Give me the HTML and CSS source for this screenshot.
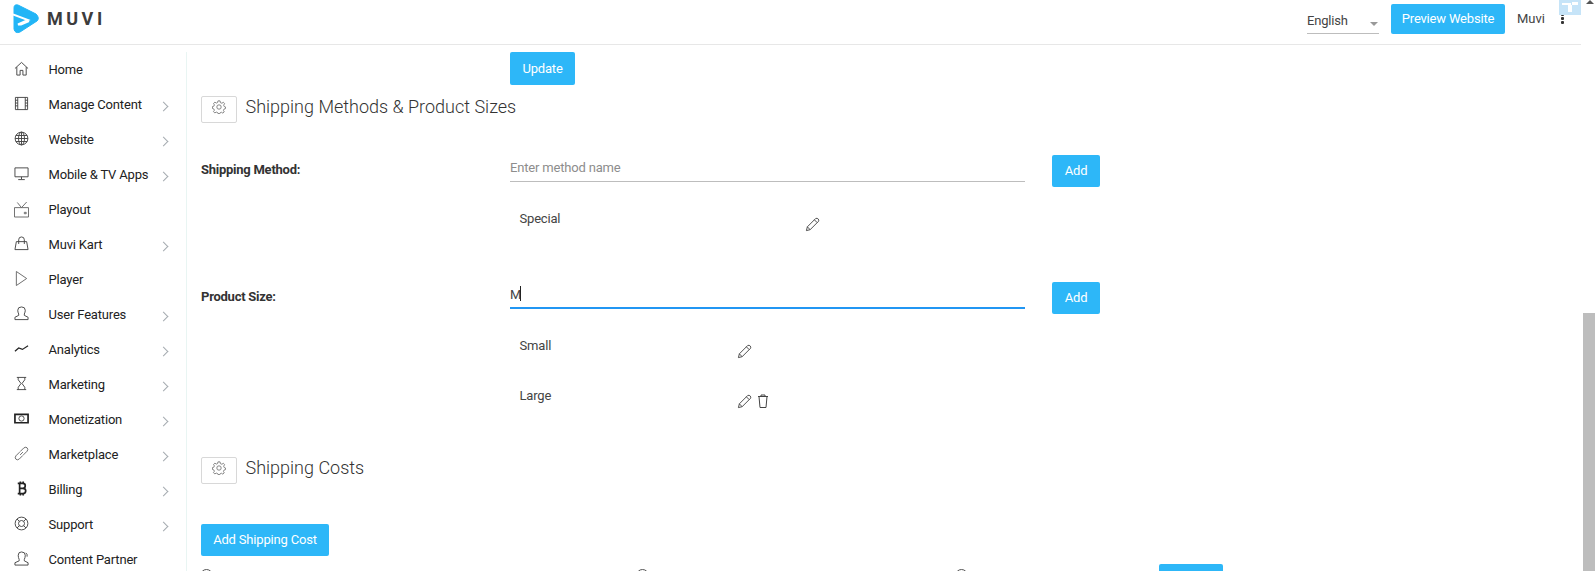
FILE: index.html
```html
<!DOCTYPE html>
<html lang="en">
<head>
<meta charset="utf-8">
<title>Muvi - Shipping</title>
<link rel="stylesheet" href="styles.css">
</head>
<body>
<div class="page">
  <header class="topbar">
    <a class="logo">
      <svg class="logo-mark" width="27" height="30" viewBox="0 0 27 30"><path d="M1 4Q1 0 5 1L23 10Q27 14 24 17L7 28Q2 30 1 25Z" fill="#22b5f6" stroke="#22b5f6" stroke-linejoin="round"/><path d="M0 10.500L15 16L5 20.500H8L16 17" fill="none" stroke="#fff" stroke-width="2"/></svg>
      <span class="logo-text">MUVI</span>
    </a>
    <div class="lang"><span>English</span><i class="lang-caret"></i></div>
    <button class="btn btn-preview">Preview Website</button>
    <span class="user">Muvi</span>
    <span class="kebab"><i></i><i></i><i></i></span>
    <div class="tile"><i class="t1"></i><i class="t2"></i><i class="t3"></i></div>
  </header>
  <div class="layout">
    <nav class="sidebar">
      <a class="nav-item"><svg class="ico" viewBox="0 0 16 16"><path d="M1 8L8 1.500L15 8M3 6.500V15H6.500V10H9.500V15H13V6.500"/></svg><span>Home</span></a>
      <a class="nav-item more"><svg class="ico" viewBox="0 0 16 16"><path d="M1.500 1.500H14.500V14.500H1.500ZM4 1.500V14.500M12 1.500V14.500M1.500 4.500H4M1.500 7.500H4M1.500 10.500H4M12 4.500H14.500M12 7.500H14.500M12 10.500H14.500"/></svg><span>Manage Content</span></a>
      <a class="nav-item more"><svg class="ico" viewBox="0 0 16 16"><circle cx="8" cy="8" r="6.800"/><ellipse cx="8" cy="8" rx="3.200" ry="6.800"/><path d="M8 1.200V14.800M1.200 8H14.800M2 4.800H14M2 11.200H14"/></svg><span>Website</span></a>
      <a class="nav-item more"><svg class="ico" viewBox="0 0 16 16"><path d="M1 2H15V11.500H1ZM8 11.500V14M4.500 14.500H11.500"/></svg><span>Mobile &amp; TV Apps</span></a>
      <a class="nav-item"><svg class="ico ico-tall" viewBox="0 0 16 17"><path class="soft" d="M0.500 6.500H15.500V16.500H0.500ZM3.500 1L8 6.500L13.500 0.500M11 11.500H13V13H11Z"/></svg><span>Playout</span></a>
      <a class="nav-item more"><svg class="ico" viewBox="0 0 16 16"><path d="M2.500 6H13.500L15 14.500H1ZM5 8.500V4Q5 1 8 1Q11 1 11 4V8.500"/></svg><span>Muvi Kart</span></a>
      <a class="nav-item"><svg class="ico" viewBox="0 0 16 16"><path class="soft" d="M2.500 0.500L13.500 8L2.500 15.500Z"/></svg><span>Player</span></a>
      <a class="nav-item more"><svg class="ico" viewBox="0 0 16 16"><path d="M5 8.500Q4 6.500 4 4.500Q4 1 8 1Q12 1 12 4.500Q12 6.500 11 8.500V10L15 12V14.500H1V12L5 10Z"/></svg><span>User Features</span></a>
      <a class="nav-item more"><svg class="ico" viewBox="0 0 16 16"><path class="dark" d="M1 11L5 7.500L9 9L15 5"/></svg><span>Analytics</span></a>
      <a class="nav-item more"><svg class="ico" viewBox="0 0 16 16"><path d="M3 1.500H13M3 14.500H13M4.500 1.500V4L7.500 8L4.500 12V14.500M11.500 1.500V4L8.500 8L11.500 12V14.500"/></svg><span>Marketing</span></a>
      <a class="nav-item more"><svg class="ico" viewBox="0 0 16 16"><path class="thick" d="M1 3.500H15V12.500H1Z"/><circle cx="8" cy="8" r="2.800"/></svg><span>Monetization</span></a>
      <a class="nav-item more"><svg class="ico" viewBox="0 0 16 16"><path class="soft" d="M6.500 9.500L9.500 6.500M6 6.500L2 10.500Q0.500 13 2 14Q3.500 15.500 5.500 14L9.500 10M6.500 6L10.500 2Q13 0.500 14 2Q15.500 3.500 14 5.500L10 9.500"/></svg><span>Marketplace</span></a>
      <a class="nav-item more"><svg class="ico" viewBox="0 0 16 16"><path class="thick" d="M4 2.500H9.500Q12 2.500 12 5Q12 7.800 9.500 7.800H6M9.500 7.800Q12.500 7.800 12.500 10.500Q12.500 13.500 9.500 13.500H4M6 2.500V13.500M6.800 0.500V2.500M9.800 0.500V2.500M6.800 13.500V15.500M9.800 13.500V15.500"/></svg><span>Billing</span></a>
      <a class="nav-item more"><svg class="ico" viewBox="0 0 16 16"><circle cx="8" cy="8" r="6.800"/><circle cx="8" cy="8" r="3.200"/><path d="M3.200 3.200L5.700 5.700M12.800 3.200L10.300 5.700M3.200 12.800L5.700 10.300M12.800 12.800L10.300 10.300"/></svg><span>Support</span></a>
      <a class="nav-item"><svg class="ico" viewBox="0 0 16 16"><path d="M5.500 9Q4.500 7 4.500 4.500Q4.500 1 8 1Q12 1 12 4.500Q12 7 11 9V10.500L15 12.500V15H1V12.500L5.500 10.500ZM12.500 2Q14.500 3 14 6"/></svg><span>Content Partner</span></a>
    </nav>
    <main class="content">
      <button class="btn btn-update">Update</button>

      <div class="section-head">
        <span class="gear-box"><svg class="gear" viewBox="0 0 16 16"><circle cx="8" cy="8" r="2.500"/><path d="M6.800 1H9.200L9.600 3L11.300 3.700L13 2.600L14.400 4.200L13.300 5.900L13.900 7.400L15.500 8V9.800L13.800 10.300L13.100 12L14 13.600L12.400 15L10.800 14L9.300 14.600L9 15.500H6.800L6.500 14.400L4.900 13.800L3.200 14.800L1.700 13.300L2.700 11.700L2.100 10.200L0.500 9.700V7.500L2.100 7.100L2.700 5.600L1.800 3.900L3.300 2.500L5 3.500L6.400 2.900Z"/></svg></span>
        <h2>Shipping Methods &amp; Product Sizes</h2>
      </div>

      <div class="field field-first">
        <label class="field-label">Shipping Method:</label>
        <input class="field-input" type="text" placeholder="Enter method name">
        <button class="btn btn-add">Add</button>
      </div>
      <ul class="items">
        <li class="item"><span class="item-name name-wide">Special</span><svg class="tool" viewBox="0 0 16 16"><path d="M1.500 14.500L2.500 10.500L11.500 1.500Q13 1 14.200 2.200Q15 3.500 14.500 4.500L5.500 13.500ZM2.500 10.500L5.500 13.500M10 3L13 6"/></svg></li>
      </ul>

      <div class="field field-second">
        <label class="field-label">Product Size:</label>
        <div class="input-wrap">
          <input class="field-input focused" type="text" value="M">
          <i class="caret"></i>
        </div>
        <button class="btn btn-add">Add</button>
      </div>
      <ul class="items">
        <li class="item"><span class="item-name">Small</span><svg class="tool" viewBox="0 0 16 16"><path d="M1.500 14.500L2.500 10.500L11.500 1.500Q13 1 14.200 2.200Q15 3.500 14.500 4.500L5.500 13.500ZM2.500 10.500L5.500 13.500M10 3L13 6"/></svg></li>
        <li class="item"><span class="item-name">Large</span><svg class="tool" viewBox="0 0 16 16"><path d="M1.500 14.500L2.500 10.500L11.500 1.500Q13 1 14.200 2.200Q15 3.500 14.500 4.500L5.500 13.500ZM2.500 10.500L5.500 13.500M10 3L13 6"/></svg><svg class="tool trash" viewBox="0 0 12 14"><path d="M1 2.500H11M4 2.500V1H8V2.500M2 2.500L3 13.500H9L10 2.500"/></svg></li>
      </ul>

      <div class="section-head head-costs">
        <span class="gear-box"><svg class="gear" viewBox="0 0 16 16"><circle cx="8" cy="8" r="2.500"/><path d="M6.800 1H9.200L9.600 3L11.300 3.700L13 2.600L14.400 4.200L13.300 5.900L13.900 7.400L15.500 8V9.800L13.800 10.300L13.100 12L14 13.600L12.400 15L10.800 14L9.300 14.600L9 15.500H6.800L6.500 14.400L4.900 13.800L3.200 14.800L1.700 13.300L2.700 11.700L2.100 10.200L0.500 9.700V7.500L2.100 7.100L2.700 5.600L1.800 3.900L3.300 2.500L5 3.500L6.400 2.900Z"/></svg></span>
        <h2>Shipping Costs</h2>
      </div>

      <button class="btn btn-cost">Add Shipping Cost</button>

      <div class="radio-row">
        <i class="radio radio-first"></i>
        <i class="radio"></i>
        <i class="radio"></i>
        <button class="btn btn-go"></button>
      </div>
    </main>
  </div>
</div>
<aside class="scrollbar"><i class="arrow"></i><i class="thumb"></i></aside>
</body>
</html>
```
FILE: styles.css
```css
* { box-sizing: border-box; }
html, body { margin: 0; height: 571px; overflow: hidden; }
body {
  display: flex;
  background: #fff;
  font: 13px/16px Roboto, "Liberation Sans", sans-serif;
  letter-spacing: -0.180px;
  color: #333;
}
.page { width: 1581px; flex: none; height: 571px; overflow: hidden; }

.btn {
  display: block;
  border: 0;
  border-radius: 2px;
  background: #2db7f8;
  color: #fff;
  font: 400 13px/16px Roboto, "Liberation Sans", sans-serif;
  letter-spacing: -0.180px;
  padding: 0;
}

/* header */
.topbar {
  position: relative;
  display: flex;
  align-items: flex-start;
  height: 45px;
  border-bottom: 1px solid #e7e7e7;
}
.logo { display: flex; align-items: center; margin: 4px 0 0 13px; height: 30px; }
.logo-mark { display: block; }
.logo-text {
  margin-left: 7px;
  font: 700 18px/20px Roboto, sans-serif;
  letter-spacing: 3.500px;
  color: #3c3c3c;
}
.lang {
  position: relative;
  margin: 4px 0 0 auto;
  width: 72px;
  height: 30px;
  padding-top: 9px;
  border-bottom: 1px solid #bdbdbd;
  color: #444;
}
.lang-caret {
  position: absolute;
  right: 1px;
  top: 18px;
  border: 4px solid transparent;
  border-top: 4px solid #999;
  border-bottom: 0;
}
.btn-preview { margin: 4px 0 0 12px; width: 114px; height: 30px; }
.user { margin: 11px 0 0 12px; width: 44px; color: #444; letter-spacing: 0; }
.kebab { display: flex; flex-direction: column; gap: 1px; width: 20px; margin-top: 13px; }
.kebab i { width: 3px; height: 3px; border-radius: 1px; background: #333; }
.tile {
  position: absolute;
  left: 1559px;
  top: 0;
  width: 22px;
  height: 15px;
  background: #c6e4f8;
}
.tile i { position: absolute; background: #fff; }
.tile .t1 { left: 3px; top: 3px; width: 9px; height: 2px; }
.tile .t2 { left: 13px; top: 2px; width: 6px; height: 3px; }
.tile .t3 { left: 9px; top: 5px; width: 4px; height: 7px; }

/* sidebar */
.layout { display: flex; align-items: flex-start; }
.sidebar {
  flex: none;
  width: 187px;
  margin-top: 7px;
  border-right: 1px solid #e9f5f3;
}
.nav-item {
  position: relative;
  display: flex;
  align-items: center;
  height: 35px;
  padding-left: 14px;
  color: #222;
}
.ico {
  flex: none;
  width: 15px;
  height: 15px;
  margin: -3px 19.500px 0 0;
  fill: none;
  stroke: #444;
  stroke-width: 1;
}
.ico-tall { height: 17px; margin-top: -1px; }
.ico .soft { stroke: #666; }
.ico .dark { stroke: #222; stroke-width: 1.300; }
.ico .thick { stroke: #222; stroke-width: 1.800; }
.more::after {
  content: "";
  position: absolute;
  left: 159.500px;
  top: 16px;
  width: 6px;
  height: 6px;
  border-top: 1px solid #a5abb0;
  border-right: 1px solid #a5abb0;
  transform: rotate(45deg);
}

/* content */
.content { flex: 1; padding-left: 14px; min-width: 0; }
.btn-update { margin: 7px 0 0 309px; width: 65px; height: 33px; }
.section-head { display: flex; align-items: center; margin-top: 11px; height: 27px; }
.gear-box {
  display: flex;
  justify-content: center;
  width: 36px;
  height: 27px;
  padding-top: 3px;
  border: 1px solid #d8d8d8;
  border-radius: 2px;
}
.gear { width: 14px; height: 14px; fill: none; stroke: #777; stroke-width: 1; }
.section-head h2 {
  margin: -5px 0 0 8.500px;
  font: 300 18px/24px Roboto, sans-serif;
  letter-spacing: 0;
  color: #333;
}
.field {
  display: grid;
  grid-template-columns: 309px 515px 48px;
  column-gap: 0;
  align-items: start;
}
.field-first { margin-top: 27px; }
.field-second { margin-top: 17px; }
.field-label { margin-top: 12px; font-weight: 700; letter-spacing: -0.250px; color: #333; }
.field-input {
  display: block;
  width: 100%;
  height: 32px;
  padding: 4px 0 0;
  border: 0;
  border-bottom: 1px solid #bdbdbd;
  outline: 0;
  font: 13px/16px Roboto, sans-serif;
  letter-spacing: -0.180px;
  color: #444;
}
.field-input::placeholder { color: #8d8d8d; opacity: 1; }
.field-input.focused { border-bottom: 2px solid #2196f3; }
.input-wrap { position: relative; }
.caret { position: absolute; left: 10px; top: 9px; width: 1px; height: 15px; background: #222; }
.btn-add { margin: 5px 0 0 27px; width: 48px; height: 32px; }
.items { list-style: none; margin: 23px 0 0 318px; padding: 0; }
.item { display: flex; align-items: flex-start; height: 50px; padding-top: 1px; color: #444; }
.item-name { width: 218px; padding-left: 0.500px; }
.item-name.name-wide { width: 286px; }
.tool { width: 15px; height: 15px; margin-top: 6px; fill: none; stroke: #444; stroke-width: 1; }
.tool.trash { width: 12px; height: 14px; margin-left: 5px; }
.head-costs { margin-top: 20px; }
.btn-cost { margin-top: 40px; width: 128px; height: 32px; }
.radio-row {
  display: grid;
  grid-template-columns: 435px 319px 204px 64px;
  margin-top: 8px;
}
.radio {
  width: 13px;
  height: 13px;
  margin-top: 5px;
  border: 1px solid #555;
  border-radius: 50%;
}
.radio-first { margin-left: -1px; }
.btn-go { height: 32px; }

/* scrollbar */
.scrollbar { position: relative; flex: 1; height: 571px; }
.arrow {
  position: absolute;
  left: 5px;
  top: 0;
  border: 4px solid transparent;
  border-bottom: 4px solid #555;
  border-top: 0;
}
.thumb {
  position: absolute;
  left: 2px;
  right: 0;
  top: 313px;
  bottom: 0;
  background: #bdbdbd;
}
```
